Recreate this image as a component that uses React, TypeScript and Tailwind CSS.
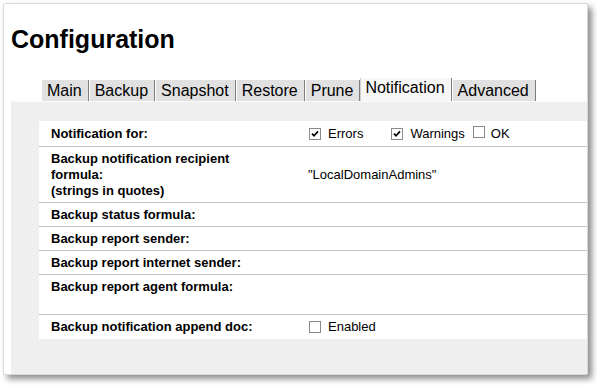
import React from 'react';

const tabs = ['Main', 'Backup', 'Snapshot', 'Restore', 'Prune', 'Notification', 'Advanced'];

const Check: React.FC<{ checked?: boolean }> = ({ checked }) => (
  <span className="inline-flex h-[12px] w-[12px] shrink-0 items-center justify-center border border-[#8a8a8a] bg-white">
    {checked && (
      <svg width="8" height="8" viewBox="0 0 8 8">
        <path d="M1 3.6 L3 5.8 L7 1.4" stroke="#000" strokeWidth="1.7" fill="none" />
      </svg>
    )}
  </span>
);

type Row = {
  label: React.ReactNode;
  h: string;
  top?: boolean;
  last?: boolean;
  value?: React.ReactNode;
};

const rows: Row[] = [
  {
    label: 'Notification for:',
    h: 'h-[26px]',
    value: (
      <div className="flex items-center">
        <Check checked />
        <span className="ml-[7px]">Errors</span>
        <span className="ml-[28px]"><Check checked /></span>
        <span className="ml-[7px]">Warnings</span>
        <span className="ml-[8px]"><Check /></span>
        <span className="ml-[6px]">OK</span>
      </div>
    ),
  },
  {
    label: (
      <>
        Backup notification recipient formula:
        <br />
        (strings in quotes)
      </>
    ),
    h: 'h-[56px]',
    value: <span className="-ml-px">"LocalDomainAdmins"</span>,
  },
  { label: 'Backup status formula:', h: 'h-[24px]' },
  { label: 'Backup report sender:', h: 'h-[24px]' },
  { label: 'Backup report internet sender:', h: 'h-[24px]' },
  { label: 'Backup report agent formula:', h: 'h-[40px]', top: true },
  {
    label: 'Backup notification append doc:',
    h: 'h-[24px]',
    last: true,
    value: (
      <div className="flex items-center">
        <Check />
        <span className="ml-[7px]">Enabled</span>
      </div>
    ),
  },
];

export default function App() {
  return (
    <div
      className="h-[385px] w-[597px] overflow-hidden bg-white pl-[3px] pt-[3px] text-black"
      style={{ fontFamily: '"Liberation Sans", Arial, sans-serif' }}
    >
      <div className="flex h-[372px] w-[585px] flex-col overflow-hidden rounded-[2px] border border-[#d9d9d9] bg-white shadow-[4px_4px_6px_rgba(0,0,0,0.45)]">
        {/* Title */}
        <h1 className="ml-[7px] mt-[21px] text-[25px] font-bold leading-[28px]">Configuration</h1>

        {/* Tabs */}
        <div className="ml-[37px] mt-[25px] flex h-[23px] items-end text-[16px]">
          {tabs.map(t =>
            t === 'Notification' ? (
              <div
                key={t}
                className="flex h-[23px] items-start border-l border-r border-l-[#d0d0d0] border-r-[#7d7d7d] bg-[#f7f7f7] pl-[4px] pr-[6px] leading-[20px]"
              >
                {t}
              </div>
            ) : (
              <div
                key={t}
                className="ml-px h-[21px] border-r border-[#7d7d7d] bg-[#e1e1e1] pl-[5px] pr-[6px] leading-[21px]"
              >
                {t}
              </div>
            )
          )}
        </div>

        {/* Panel */}
        <div className="ml-[7px] flex-1 border-t border-[#fafafa] bg-[#efefef] pl-[28px] pt-[19px]">
          <div className="bg-white text-[13px]">
            {rows.map((r, i) => (
              <div
                key={i}
                className={`flex ${r.h} ${r.last ? '' : 'border-b border-[#c4c4c4]'}`}
              >
                <div
                  className={`flex w-[270px] shrink-0 pl-[12px] pr-[40px] font-bold leading-4 ${
                    r.top ? 'items-start pt-[4px]' : 'items-center'
                  }`}
                >
                  <div>{r.label}</div>
                </div>
                <div className="flex flex-1 items-center leading-4">{r.value}</div>
              </div>
            ))}
          </div>
        </div>
      </div>
    </div>
  );
}
